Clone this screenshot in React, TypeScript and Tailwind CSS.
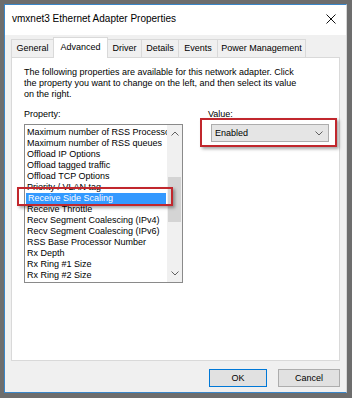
import React from "react";

const items = [
  "Maximum number of RSS Processors",
  "Maximum number of RSS queues",
  "Offload IP Options",
  "Offload tagged traffic",
  "Offload TCP Options",
  "Priority / VLAN tag",
  "Receive Side Scaling",
  "Receive Throttle",
  "Recv Segment Coalescing (IPv4)",
  "Recv Segment Coalescing (IPv6)",
  "RSS Base Processor Number",
  "Rx Depth",
  "Rx Ring #1 Size",
  "Rx Ring #2 Size",
];

function Chevron({ up }: { up?: boolean }) {
  return (
    <svg width="8" height="5" viewBox="0 0 8 5" className="block">
      <polyline
        points={up ? "0.5,4.5 4,1 7.5,4.5" : "0.5,0.5 4,4 7.5,0.5"}
        fill="none"
        stroke="#606060"
        strokeWidth="1"
      />
    </svg>
  );
}

export default function App() {
  return (
    <div className="w-[352px] h-[398px] bg-[#6d6d6d] pl-[4px] pt-[4px] pr-[5px] pb-[5px] font-['Liberation_Sans',Arial,sans-serif] text-black">
      <div className="w-full h-full border border-[#3a86c8] border-r-[#d6d6d6] flex flex-col bg-[#f0f0f0]">
        {/* Title bar */}
        <div className="h-[30px] bg-white flex items-center justify-between pl-[7px] pr-[10px] pb-[2px] shrink-0">
          <span className="text-[10px] leading-[12px]">vmxnet3 Ethernet Adapter Properties</span>
          <svg width="10" height="10" viewBox="0 0 10 10" className="block">
            <line x1="0.5" y1="0.5" x2="9.5" y2="9.5" stroke="#111" strokeWidth="1" />
            <line x1="9.5" y1="0.5" x2="0.5" y2="9.5" stroke="#111" strokeWidth="1" />
          </svg>
        </div>

        {/* Body */}
        <div className="flex-1 flex flex-col px-[6px] pt-[2px] text-[9px] leading-[11px]">
          {/* Tabs */}
          <div className="h-[20px] flex items-end shrink-0">
            <div className="w-[42px] h-[18px] border-t border-l border-[#d9d9d9] flex items-center justify-center">General</div>
            <div className="w-[55px] h-[21px] -mb-[1px] relative z-10 bg-white border-t border-x border-[#d9d9d9] flex items-center justify-center pb-[2px]">Advanced</div>
            <div className="w-[34px] h-[18px] border-t border-r border-[#d9d9d9] flex items-center justify-center">Driver</div>
            <div className="w-[37px] h-[18px] border-t border-r border-[#d9d9d9] flex items-center justify-center">Details</div>
            <div className="w-[39px] h-[18px] border-t border-r border-[#d9d9d9] flex items-center justify-center">Events</div>
            <div className="w-[88px] h-[18px] border-t border-r border-[#d9d9d9] flex items-center justify-center">Power Management</div>
          </div>

          {/* Panel */}
          <div className="h-[304px] shrink-0 bg-white border border-[#d9d9d9] relative pl-[12px] pt-[9px]">
            <p>
              The following properties are available for this network adapter. Click
              <br />
              the property you want to change on the left, and then select its value
              <br />
              on the right.
            </p>

            <div className="flex mt-[9px]">
              <div className="w-[159px]">
                <div>Property:</div>
                <div className="mt-[4px] h-[159px] border border-[#8a8a8a] flex">
                  <div className="flex-1 pt-[2px] overflow-hidden">
                    {items.map((it, i) => (
                      <div
                        key={it}
                        className={
                          "h-[11px] leading-[11px] pl-[2px] whitespace-nowrap overflow-hidden " +
                          (i === 6 ? "bg-[#3399ff] text-white mx-[1px] pl-[1px]" : "")
                        }
                      >
                        {it}
                      </div>
                    ))}
                  </div>
                  <div className="w-[15px] bg-[#f0f0f0] flex flex-col">
                    <div className="h-[17px] flex items-center justify-center">
                      <Chevron up />
                    </div>
                    <div className="flex-1">
                      <div className="mt-[35px] h-[45px] mx-[1px] bg-[#d4d4d4]" />
                    </div>
                    <div className="h-[17px] flex items-center justify-center">
                      <Chevron />
                    </div>
                  </div>
                </div>
              </div>

              <div className="ml-[25px]">
                <div>Value:</div>
                <div className="mt-[4px] ml-[3px] w-[118px] h-[18px] border border-[#adadad] bg-[#e5e5e5] flex items-center justify-between pl-[3px] pr-[5px]">
                  <span>Enabled</span>
                  <Chevron />
                </div>
              </div>
            </div>

            {/* Red highlight boxes */}
            <div className="absolute left-[5px] top-[129px] w-[156px] h-[19px] border-2 border-[#c1272d] shadow-[2px_2px_3px_rgba(0,0,0,0.35)]" />
            <div className="absolute left-[188px] top-[60px] w-[137px] h-[29px] border-2 border-[#c1272d] shadow-[2px_2px_3px_rgba(0,0,0,0.35)]" />
          </div>

          {/* Buttons */}
          <div className="flex justify-end gap-[11px] mt-[8px]">
            <div className="w-[58px] h-[18px] border border-[#0078d7] bg-[#e1e1e1] flex items-center justify-center">OK</div>
            <div className="w-[62px] h-[18px] border border-[#adadad] bg-[#e1e1e1] flex items-center justify-center">Cancel</div>
          </div>
        </div>
      </div>
    </div>
  );
}
